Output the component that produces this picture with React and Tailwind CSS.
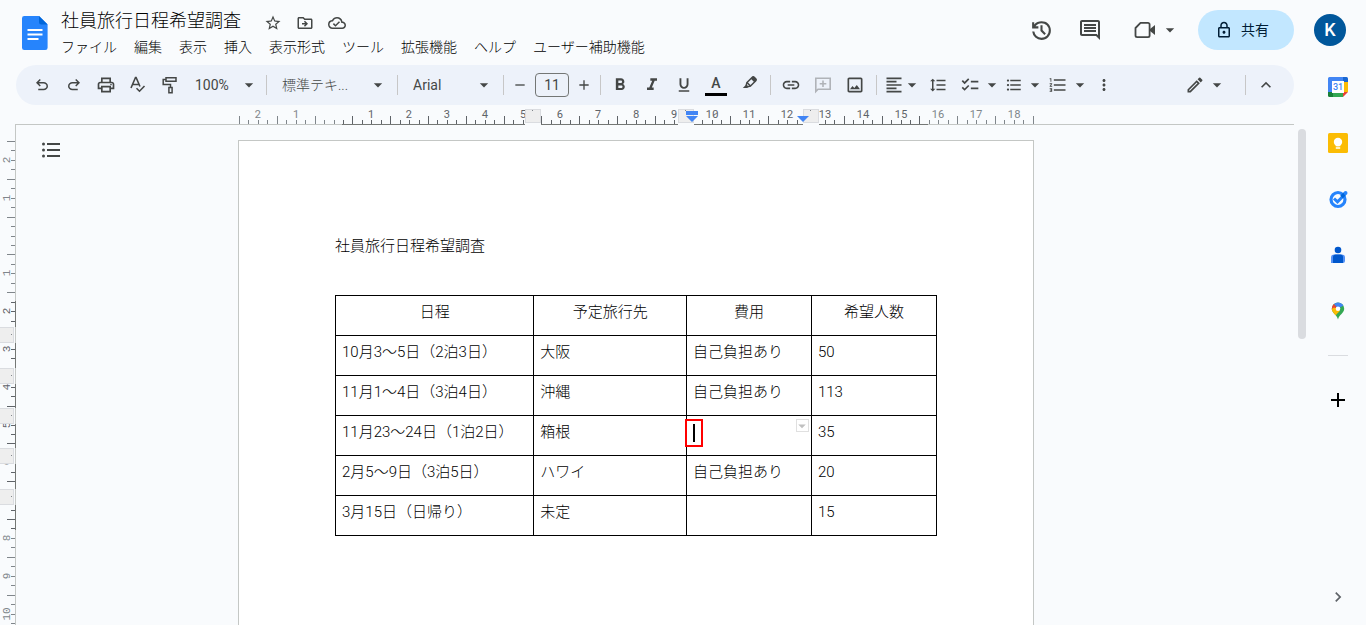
import { useState } from 'react';
import {
    MdAdd,
    MdArrowDropDown,
    MdChevronRight,
    MdExpandLess,
    MdFormatAlignLeft,
    MdFormatBold,
    MdFormatItalic,
    MdFormatLineSpacing,
    MdFormatListBulleted,
    MdFormatListNumbered,
    MdFormatUnderlined,
    MdLink,
    MdMoreVert,
    MdOutlineChecklist,
    MdOutlineCloudDone,
    MdOutlineComment,
    MdOutlineDriveFileMove,
    MdOutlineImage,
    MdOutlineLock,
    MdOutlineModeEdit,
    MdOutlinePrint,
    MdRemove,
    MdStarOutline,
} from 'react-icons/md';

const MENUS = ['ファイル', '編集', '表示', '挿入', '表示形式', 'ツール', '拡張機能', 'ヘルプ', 'ユーザー補助機能'];

const HEADERS = ['日程', '予定旅行先', '費用', '希望人数'];

const TRIPS = [
    { date: '10月3〜5日（2泊3日）', place: '大阪', cost: '自己負担あり', people: 50 },
    { date: '11月1〜4日（3泊4日）', place: '沖縄', cost: '自己負担あり', people: 113 },
    { date: '11月23〜24日（1泊2日）', place: '箱根', cost: '', people: 35, active: true },
    { date: '2月5〜9日（3泊5日）', place: 'ハワイ', cost: '自己負担あり', people: 20 },
    { date: '3月15日（日帰り）', place: '未定', cost: '', people: 15 },
];

const CM = 37.8;

/* ---------- icons ---------- */

function DocsLogo() {
    return (
        <svg width="26" height="34" viewBox="0 0 26 34" aria-hidden="true">
            <path d="M2.3 0H17l8.600 8.600V31.700A2.300 2.300 0 0 1 23.300 34H2.300A2.300 2.300 0 0 1 0 31.700V2.300A2.300 2.300 0 0 1 2.300 0z" fill="#2684fc" />
            <path d="M17 0l8.600 8.600H19.300A2.300 2.300 0 0 1 17 6.300z" fill="#0066da" />
            <path d="M5.500 13h15v2h-15zM5.500 17.500h15v2h-15zM5.500 22h11v2h-11z" fill="#fff" />
        </svg>
    );
}

function HistoryIcon() {
    return (
        <svg width="25" height="25" viewBox="0 0 24 24" fill="currentColor" aria-hidden="true">
            <path d="M12 21q-3.450 0-6.012-2.287T3.050 13H5.100q.35 2.600 2.313 4.300T12 19q2.925 0 4.963-2.037T19 12t-2.037-4.962T12 5q-1.725 0-3.225.8T6.250 8H9v2H3V4h2v2.350q1.275-1.600 3.113-2.475T12 3q1.875 0 3.513.713t2.850 1.924 1.925 2.850T21 12t-.712 3.513-1.925 2.850-2.850 1.925T12 21m2.800-4.800L11 12.400V7h2v4.600l3.200 3.200z" />
        </svg>
    );
}

function UndoIcon({ flip }) {
    return (
        <svg width="18" height="18" viewBox="0 0 24 24" fill="currentColor" className={flip ? '-scale-x-100' : ''} aria-hidden="true">
            <path d="M7 19v-2h7.100q1.575 0 2.738-1T18 13.500 16.838 11 14.100 10H7.800l2.600 2.600L9 14 4 9l5-5 1.400 1.400L7.800 8h6.300q2.425 0 4.163 1.575T20 13.500t-1.737 3.925T14.100 19z" />
        </svg>
    );
}

function SpellIcon() {
    return (
        <svg width="18" height="18" viewBox="0 0 18 18" fill="none" stroke="currentColor" strokeWidth="1.600" aria-hidden="true">
            <path d="M2 12L6.500 1.500h.6L11 10.500M3.800 8.500h6" />
            <path d="M7.500 12.200l3 3 5-5.200" />
        </svg>
    );
}

function PaintIcon() {
    return (
        <svg width="18" height="18" viewBox="0 0 18 18" fill="none" stroke="currentColor" strokeWidth="1.500" aria-hidden="true">
            <path d="M5 1.700h10v3.600H5zM5 3.500H2.200v5h7.300v3" />
            <path d="M7.900 11.500h3.200v5.200H7.900z" />
        </svg>
    );
}

function HighlighterIcon() {
    return (
        <svg width="16" height="16" viewBox="0 0 16 16" fill="none" stroke="currentColor" strokeWidth="1.500" strokeLinejoin="round" aria-hidden="true">
            <path d="M5 7.500l5.300-5.300a1.200 1.200 0 0 1 1.700 0l1.800 1.800a1.200 1.200 0 0 1 0 1.700L8.500 11z" />
            <path d="M8.800 3.700L10.700 1.800a1.400 1.400 0 0 1 1.800 0l1.700 1.700a1.400 1.400 0 0 1 0 1.800L12.300 7.200z" fill="currentColor" stroke="none" />
            <path d="M5 7.500l-.8 2.800 1.500 1.500L8.500 11" />
            <path d="M.8 13L3.800 10l2.200 2.200-.8.800z" fill="currentColor" stroke="none" />
        </svg>
    );
}

function AddCommentIcon() {
    return (
        <svg width="18" height="18" viewBox="0 0 18 18" fill="none" stroke="currentColor" strokeWidth="1.600" aria-hidden="true">
            <path d="M1.800 15.500V2.200h14.400v11H4z" />
            <path d="M9 4.500v6.500M5.700 7.700h6.600" />
        </svg>
    );
}

function VideoIcon() {
    return (
        <svg width="22" height="18" viewBox="0 0 22 18" aria-hidden="true">
            <path d="M6.500 1.900H14a1.600 1.600 0 0 1 1.600 1.600v11A1.600 1.600 0 0 1 14 16.100H3.100a1.600 1.600 0 0 1-1.600-1.600V7z" fill="none" stroke="currentColor" strokeWidth="1.800" strokeLinejoin="round" />
            <path d="M16 8l5-4v10l-5-4z" fill="currentColor" />
        </svg>
    );
}

function OutlineIcon() {
    return (
        <svg width="20" height="16" viewBox="0 0 20 16" fill="currentColor" aria-hidden="true">
            <circle cx="2.500" cy="2" r="1.500" />
            <circle cx="2.500" cy="8" r="1.500" />
            <circle cx="2.500" cy="14" r="1.500" />
            <path d="M6 1h13v2H6zM6 7h13v2H6zM6 13h13v2H6z" />
        </svg>
    );
}

function CalendarIcon() {
    return (
        <svg width="20" height="20" viewBox="0 0 20 20" aria-hidden="true">
            <path d="M1.500 0H15v5H5v10H0V1.500A1.500 1.500 0 0 1 1.500 0z" fill="#4285f4" />
            <path d="M15 0h3.500A1.500 1.500 0 0 1 20 1.500V5h-5z" fill="#1967d2" />
            <path d="M15 5h5v10h-5z" fill="#fbbc04" />
            <path d="M5 15h10v5H5z" fill="#34a853" />
            <path d="M0 15h5v5H1.500A1.500 1.500 0 0 1 0 18.500z" fill="#188038" />
            <path d="M15 15h5l-5 5z" fill="#ea4335" />
            <path d="M4 4h12v12H4z" fill="#fff" />
            <text x="10" y="13" textAnchor="middle" fontSize="9" fontWeight="500" fontFamily="Roboto, sans-serif" fill="#4285f4">31</text>
        </svg>
    );
}

function KeepIcon() {
    return (
        <svg width="20" height="20" viewBox="0 0 20 20" aria-hidden="true">
            <rect width="20" height="20" rx="1.600" fill="#fbbc04" />
            <circle cx="10" cy="9" r="4.200" fill="#fff" />
            <path d="M7.800 11h4.400v2.200H7.800zM7.800 14.300h4.400v1.400H7.800z" fill="#fff" />
        </svg>
    );
}

function TasksIcon() {
    return (
        <svg width="20" height="20" viewBox="0 0 20 20" fill="none" aria-hidden="true">
            <circle cx="10" cy="10.500" r="7" stroke="#2684fc" strokeWidth="3.200" />
            <path d="M6 9.500l3.500 3.300 5-5" stroke="#2684fc" strokeWidth="3" />
            <path d="M13.500 8l3.500-3.600" stroke="#0066da" strokeWidth="3.600" />
            <circle cx="17.600" cy="4" r="1.900" fill="#2684fc" />
        </svg>
    );
}

function ContactsIcon() {
    return (
        <svg width="20" height="20" viewBox="0 0 20 20" aria-hidden="true">
            <circle cx="10" cy="5" r="3.300" fill="#0057cc" />
            <path d="M6 9.500h8a3 3 0 0 1 3 3v3.500a2 2 0 0 1-2 2H3v-5.500a3 3 0 0 1 3-3z" fill="#5491f5" />
            <path d="M7.500 9.500h5a2.500 2.500 0 0 1 2.500 2.500v6H5v-6a2.500 2.500 0 0 1 2.500-2.500z" fill="#0057cc" />
        </svg>
    );
}

function MapsIcon() {
    return (
        <svg width="20" height="20" viewBox="0 0 20 20" aria-hidden="true">
            <defs>
                <clipPath id="pin">
                    <path d="M10 1.500a6.200 6.200 0 0 1 6.200 6.200c0 4.300-5 5.800-6.200 10.800-1.200-5-6.200-6.500-6.200-10.800A6.200 6.200 0 0 1 10 1.500z" />
                </clipPath>
            </defs>
            <g clipPath="url(#pin)">
                <path d="M0 0h20v20H0z" fill="#34a853" />
                <path d="M10 7.700L5 2l6-2 6 3.500z" fill="#4285f4" />
                <path d="M10 7.700L2 10V2l3 0z" fill="#ea4335" />
                <path d="M3 8.500l3-2 4 1.200 2 2L6 16H3z" fill="#fbbc04" />
            </g>
            <circle cx="10" cy="7.700" r="2.300" fill="#fff" />
        </svg>
    );
}

/* ---------- rulers ---------- */

function getTicks(from, to) {
    const ticks = [];
    for (let q = from; q <= to; q++) {
        ticks.push({
            q,
            long: Math.abs(q % 4) === 2,
            label: q % 4 === 0 && q !== 0 ? Math.abs(q / 4) : null,
        });
    }
    return ticks;
}

function HorizontalRuler() {
    const zero = 96;
    const handles = [287, 440, 565];

    return (
        <svg width="796" height="20" className="shrink-0 font-['Roboto_Mono','Liberation_Mono',monospace]" aria-hidden="true">
            <rect x="104" y="19" width="586" height="1" fill="#747775" />
            {getTicks(-10, 74).map(({ q, long, label }) => {
                const x = Math.floor(zero + (q * CM) / 4);
                const inner = x >= 104 && x <= 690;
                return (
                    <g key={q} fill={inner ? '#5f6368' : '#80868b'}>
                        <rect x={x} y={long ? 11 : 15} width="1" height={long ? 8 : 4} />
                        {label && (
                            <text x={x} y="13" textAnchor="middle" fontSize="11">{label}</text>
                        )}
                    </g>
                );
            })}
            {handles.map((x) => (
                <g key={x}>
                    <rect x={x} y="4" width="16" height="16" fill="#f9fbfd" />
                    <rect x={x + 0.5} y="4.5" width="15" height="13" fill="#eeeeee" stroke="#dadce0" />
                    <rect x={x + 7} y="5" width="1" height="1" fill="#80868b" />
                </g>
            ))}
            <path d="M448 6h12v4h-12zM448 11h12l-6 6z" fill="#4285f4" />
            <path d="M559 11h12l-6 6z" fill="#4285f4" />
        </svg>
    );
}

function VerticalRuler() {
    const zero = 111;
    const handles = [202, 243, 283, 323, 364];

    return (
        <svg width="16" height="500" className="font-['Liberation_Mono',monospace]" aria-hidden="true">
            <rect x="15" y="0" width="1" height="500" fill="#c4c7c5" />
            <rect x="15" y="176" width="1" height="229" fill="#747775" />
            {getTicks(-10, 41).map(({ q, long, label }) => {
                const y = Math.floor(zero + (q * CM) / 4);
                return (
                    <g key={q} fill={y >= 176 && y <= 405 ? '#5f6368' : '#80868b'}>
                        <rect x={long ? 7 : 11} y={y} width={long ? 8 : 4} height="1" />
                        {label && (
                            <text transform={`translate(10 ${y}) rotate(-90)`} textAnchor="middle" fontSize="11">{label}</text>
                        )}
                    </g>
                );
            })}
            {handles.map((y) => (
                <g key={y}>
                    <rect x="0" y={y} width="15" height="16" fill="#f9fbfd" />
                    <rect x="15" y={y} width="1" height="16" fill="#c4c7c5" />
                    <rect x="-0.5" y={y + 0.5} width="14" height="15" fill="#eeeeee" stroke="#dadce0" />
                    <rect x="11" y={y + 7} width="1" height="1" fill="#80868b" />
                </g>
            ))}
        </svg>
    );
}

/* ---------- toolbar ---------- */

function Caret() {
    return <MdArrowDropDown className="-mx-0.5 size-5 shrink-0" />;
}

function ToolButton({ label, children, className = 'w-8', disabled }) {
    return (
        <button type="button" aria-label={label} disabled={disabled} className={`flex h-8 shrink-0 items-center justify-center rounded disabled:text-[#b0b3b8] ${className}`}>
            {children}
        </button>
    );
}

function Divider({ className = 'mx-1' }) {
    return <span className={`h-5 w-px shrink-0 bg-[#c7c7c7] ${className}`} />;
}

function ToolSelect({ label, options, className, arrow = 'right-[5px]' }) {
    return (
        <label className={`relative flex h-8 shrink-0 items-center ${className}`}>
            <select aria-label={label} className="h-full w-full appearance-none bg-transparent outline-none">
                {options.map((option) => (
                    <option key={option}>{option}</option>
                ))}
            </select>
            <MdArrowDropDown className={`pointer-events-none absolute size-5 ${arrow}`} />
        </label>
    );
}

function Toolbar() {
    const [size, setSize] = useState('11');

    return (
        <div role="toolbar" className="ml-4 mr-4 flex h-10 shrink-0 items-center rounded-full bg-[#edf2fa] pl-2.5 pr-3 text-sm text-[#444746]">
            <ToolButton label="元に戻す"><UndoIcon /></ToolButton>
            <ToolButton label="やり直し"><UndoIcon flip /></ToolButton>
            <ToolButton label="印刷"><MdOutlinePrint className="size-5" /></ToolButton>
            <ToolButton label="スペルチェック"><SpellIcon /></ToolButton>
            <ToolButton label="書式を貼り付け"><PaintIcon /></ToolButton>
            <ToolSelect label="ズーム" options={['100%']} className="w-19 pl-[9px]" arrow="right-[3px]" />
            <Divider />
            <ToolSelect label="スタイル" options={['標準テキ...']} className="w-[122px] pl-[11px] font-light" />
            <Divider />
            <ToolSelect label="フォント" options={['Arial']} className="w-[97px] pl-[11px]" />
            <Divider />
            <ToolButton label="フォントサイズを縮小" className="w-6"><MdRemove className="size-4" /></ToolButton>
            <input
                aria-label="フォントサイズ"
                value={size}
                onChange={(e) => setSize(e.target.value)}
                className="mx-[3px] h-6 w-[34px] shrink-0 rounded border border-[#747775] bg-transparent text-center outline-none"
            />
            <ToolButton label="フォントサイズを拡大" className="w-6"><MdAdd className="size-4" /></ToolButton>
            <Divider className="ml-1 mr-[3px]" />
            <ToolButton label="太字"><MdFormatBold className="size-5" /></ToolButton>
            <ToolButton label="斜体"><MdFormatItalic className="size-5" /></ToolButton>
            <ToolButton label="下線"><MdFormatUnderlined className="size-[18px]" /></ToolButton>
            <ToolButton label="テキストの色" className="w-8 flex-col">
                <span className="text-sm leading-4 font-medium">A</span>
                <span className="mt-0.5 h-[3px] w-[22px] bg-black" />
            </ToolButton>
            <ToolButton label="ハイライトの色" className="w-8 pl-1 pb-1"><HighlighterIcon /></ToolButton>
            <Divider className="ml-1.5 mr-1" />
            <ToolButton label="リンクを挿入"><MdLink className="size-5" /></ToolButton>
            <ToolButton label="コメントを追加" disabled><AddCommentIcon /></ToolButton>
            <ToolButton label="画像を挿入"><MdOutlineImage className="size-5" /></ToolButton>
            <Divider className="mx-[5px]" />
            <ToolButton label="配置" className="w-10">
                <MdFormatAlignLeft className="size-5" />
                <Caret />
            </ToolButton>
            <ToolButton label="行間隔"><MdFormatLineSpacing className="size-[18px]" /></ToolButton>
            <ToolButton label="チェックリスト" className="ml-1 w-11 gap-1">
                <MdOutlineChecklist className="size-5" />
                <Caret />
            </ToolButton>
            <ToolButton label="箇条書き" className="w-11 gap-1">
                <MdFormatListBulleted className="size-[18px]" />
                <Caret />
            </ToolButton>
            <ToolButton label="番号付きリスト" className="w-11 gap-1">
                <MdFormatListNumbered className="size-5" />
                <Caret />
            </ToolButton>
            <ToolButton label="その他" className="w-7"><MdMoreVert className="size-[18px]" /></ToolButton>
            <ToolButton label="編集モード" className="ml-auto mr-3 w-12 gap-1">
                <MdOutlineModeEdit className="size-5" />
                <Caret />
            </ToolButton>
            <Divider />
            <ToolButton label="メニューを非表示"><MdExpandLess className="size-5" /></ToolButton>
        </div>
    );
}

/* ---------- header ---------- */

function Header() {
    return (
        <header className="flex h-[65px] shrink-0 items-start justify-between text-[#444746]">
            <div className="flex pl-[22px]">
                <a href="#" aria-label="ドキュメント ホーム" className="mt-4"><DocsLogo /></a>
                <div className="ml-[13px]">
                    <div className="flex items-center pt-2">
                        <h1 className="mt-px text-lg leading-6 font-light text-black">社員旅行日程希望調査</h1>
                        <div className="ml-[23px] mt-1 flex gap-3.5">
                            <button type="button" aria-label="スター"><MdStarOutline className="size-[18px]" /></button>
                            <button type="button" aria-label="移動"><MdOutlineDriveFileMove className="size-[18px]" /></button>
                            <button type="button" aria-label="保存状況"><MdOutlineCloudDone className="size-[18px]" /></button>
                        </div>
                    </div>
                    <nav className="mt-1 flex gap-[17px] text-sm font-light text-black">
                        {MENUS.map((menu) => (
                            <button key={menu} type="button" className="whitespace-nowrap">{menu}</button>
                        ))}
                    </nav>
                </div>
            </div>
            <div className="flex items-center pt-2.5 pr-5">
                <button type="button" aria-label="変更履歴"><HistoryIcon /></button>
                <button type="button" aria-label="コメント" className="ml-6"><MdOutlineComment className="size-6" /></button>
                <button type="button" aria-label="ビデオ通話" className="ml-8 flex items-center gap-1.5">
                    <VideoIcon />
                    <Caret />
                </button>
                <button type="button" className="ml-5 flex h-10 w-24 items-center justify-center gap-2 rounded-full bg-[#c2e7ff] pr-2 text-sm text-[#001d35]">
                    <MdOutlineLock className="size-[18px]" />
                    共有
                </button>
                <button type="button" aria-label="アカウント" className="ml-5 flex size-8 items-center justify-center rounded-full bg-[#01579b] text-lg font-medium text-white">K</button>
            </div>
        </header>
    );
}

/* ---------- document ---------- */

function CostCell({ trip }) {
    return (
        <td className="relative border border-black px-1.5 pt-1.5 align-top">
            {trip.cost}
            {trip.active && (
                <>
                    <span className="absolute -left-0.5 top-[3px] flex h-7 w-[18px] items-center justify-center border-2 border-[#ff0000]">
                        <span className="h-[18px] w-0.5 bg-black" />
                    </span>
                    <button type="button" aria-label="セルのオプション" className="absolute right-0.5 top-[3px] flex size-[13px] items-center justify-center border border-[#e0e0e0] text-[#c0c0c0]">
                        <MdArrowDropDown className="size-[18px] shrink-0" />
                    </button>
                </>
            )}
        </td>
    );
}

function DocumentPage() {
    return (
        <article className="w-[796px] border border-b-0 border-[#c4c7c5] bg-white px-24 pt-[95px] font-['Roboto','Noto_Sans_CJK_JP',sans-serif] text-[15px] leading-5 font-light text-black">
            <p>社員旅行日程希望調査</p>
            <table className="mt-[39px] w-full table-fixed border-collapse">
                <colgroup>
                    <col className="w-[33%]" />
                    <col className="w-[25.4%]" />
                    <col className="w-[20.8%]" />
                    <col className="w-[20.8%]" />
                </colgroup>
                <thead>
                    <tr className="h-10">
                        {HEADERS.map((header) => (
                            <th key={header} className="border border-black px-1.5 pt-1.5 text-center align-top font-light">{header}</th>
                        ))}
                    </tr>
                </thead>
                <tbody>
                    {TRIPS.map((trip) => (
                        <tr key={trip.date} className="h-10">
                            <td className="border border-black px-1.5 pt-1.5 align-top whitespace-nowrap">{trip.date}</td>
                            <td className="border border-black px-1.5 pt-1.5 align-top">{trip.place}</td>
                            <CostCell trip={trip} />
                            <td className="border border-black px-1.5 pt-1.5 align-top">{trip.people}</td>
                        </tr>
                    ))}
                </tbody>
            </table>
        </article>
    );
}

function SidePanel() {
    return (
        <aside className="flex w-14 shrink-0 flex-col items-center gap-5 pt-1 pb-2.5">
            <button type="button" aria-label="カレンダー" className="flex size-9 items-center justify-center"><CalendarIcon /></button>
            <button type="button" aria-label="Keep" className="flex size-9 items-center justify-center"><KeepIcon /></button>
            <button type="button" aria-label="ToDo リスト" className="flex size-9 items-center justify-center"><TasksIcon /></button>
            <button type="button" aria-label="連絡先" className="flex size-9 items-center justify-center"><ContactsIcon /></button>
            <button type="button" aria-label="マップ" className="flex size-9 items-center justify-center"><MapsIcon /></button>
            <hr className="mt-1.5 w-5 border-[#dadce0]" />
            <button type="button" aria-label="アドオンを取得" className="mt-1.5 flex size-9 items-center justify-center text-black"><MdAdd className="size-6" /></button>
            <button type="button" aria-label="サイドパネルを非表示" className="mt-auto flex size-9 items-center justify-center text-[#5f6368]"><MdChevronRight className="size-5" /></button>
        </aside>
    );
}

export default function App() {
    return (
        <div className="flex h-screen flex-col overflow-hidden bg-[#f9fbfd] font-['Roboto','Noto_Sans_CJK_JP',sans-serif]">
            <Header />
            <div className="flex min-h-0 flex-1">
                <main className="flex min-w-0 flex-1 flex-col">
                    <Toolbar />
                    <div className="ml-[15px] mr-4 flex h-5 shrink-0 justify-center pr-[37px] shadow-[inset_0_-1px_0_#c4c7c5]">
                        <HorizontalRuler />
                    </div>
                    <div className="flex min-h-0 flex-1">
                        <div className="w-4 shrink-0 overflow-hidden"><VerticalRuler /></div>
                        <div className="grid flex-1 grid-cols-[1fr_auto_1fr] overflow-hidden pr-[38px]">
                            <div className="pt-[17px] pl-[25px]">
                                <button type="button" aria-label="ドキュメントの概要" className="flex text-[#444746]"><OutlineIcon /></button>
                            </div>
                            <div className="flex pt-[15px]"><DocumentPage /></div>
                            <div />
                        </div>
                        <div className="w-4 shrink-0 px-1 pt-1">
                            <div className="h-[210px] w-2 rounded-full bg-[#dadce0]" />
                        </div>
                    </div>
                </main>
                <SidePanel />
            </div>
        </div>
    );
}
